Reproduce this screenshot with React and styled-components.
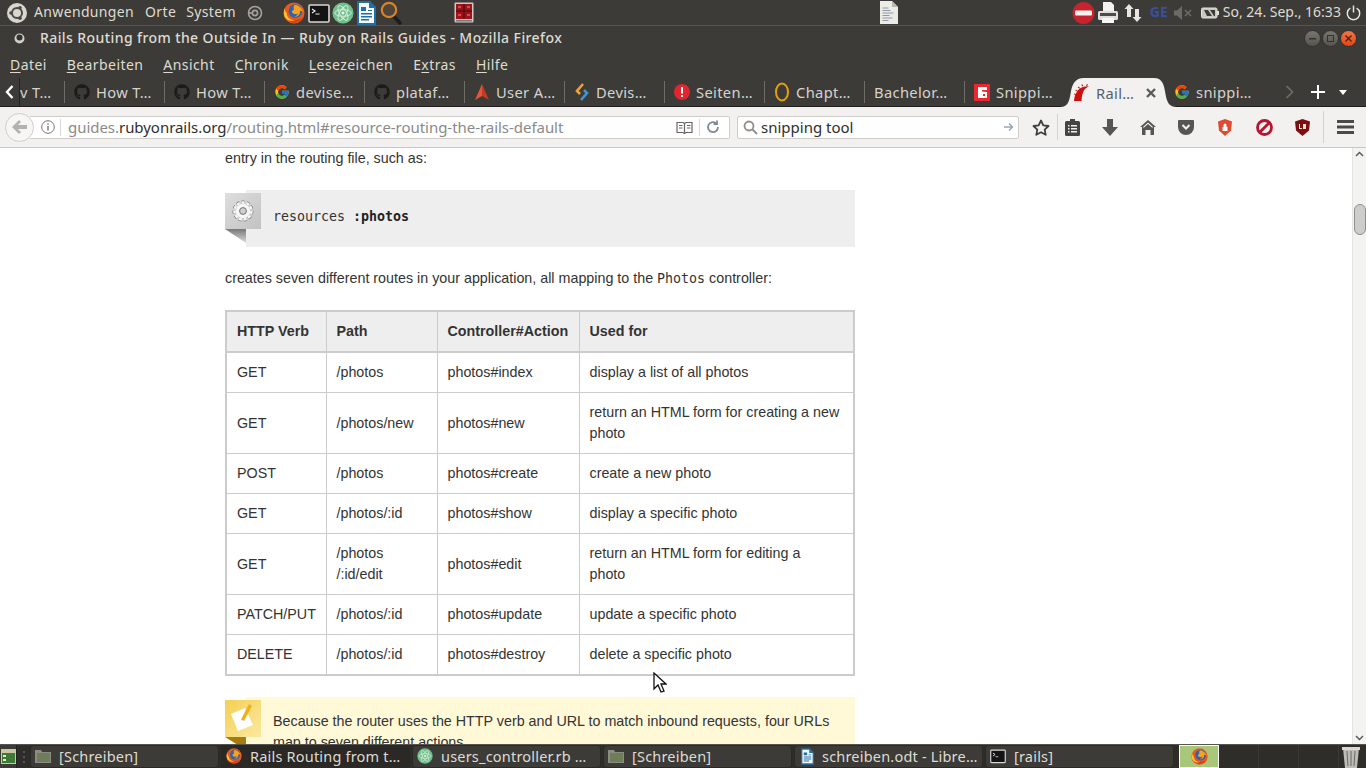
import React from 'react';
import styled, { createGlobalStyle } from 'styled-components';
import { FaGithub } from 'react-icons/fa';
import { FcGoogle } from 'react-icons/fc';

const Global = createGlobalStyle`
  html, body { margin: 0; padding: 0; width: 1366px; height: 768px; overflow: hidden; background: #fff; }
  * { box-sizing: border-box; }
`;
const UI = `"Noto Sans", "Open Sans", sans-serif`;

const Screen = styled.div`
  position: relative; width: 1366px; height: 768px; display: flex; flex-direction: column; overflow: hidden;
  font-family: ${UI};
`;
const Panel = styled.div`
  height: 26px; flex: none; background: #3c3b37; border-bottom: 1px solid #55544f;
  display: flex; align-items: center; color: #dfdbd2; font-size: 14px; padding-left: 7px;
`;
const PanelText = styled.span`
  margin-left: ${p => p.$ml || 0}px; white-space: nowrap; letter-spacing: ${p => p.$ls || 0}px; padding-bottom: 2px;
`;
const GeLabel = styled(PanelText)`color: #3a4f9f; font-weight: 700; font-size: 14px;`;
const Slot = styled.span`
  display: inline-flex; flex: none; align-items: center; justify-content: center; margin-left: ${p => p.$ml || 0}px;
  width: ${p => p.$w}px;
`;
const TitleBar = styled.div`
  height: 26px; flex: none; background: #3c3b37; display: flex; align-items: center; color: #dfdbd2;
  font-size: 14px; font-weight: 500; padding: 0 0 2px 14px;
`;
const WinBtns = styled.div`margin-left: auto; margin-right: 9px; display: flex; gap: 1px; align-items: center;`;
const WinBtn = styled.span`
  width: 17px; height: 17px; border-radius: 50%; display: flex; align-items: center; justify-content: center;
  background: ${p => p.$close ? 'linear-gradient(#f2764a,#dd4814)' : 'linear-gradient(#77766f,#55544f)'};
  border: 1px solid #33322e;
`;
const MenuBar = styled.div`
  height: 26px; flex: none; background: #3c3b37; display: flex; align-items: center; color: #dfdbd2;
  font-size: 14px; padding: 0 0 2px 10px; gap: 20px;
`;
const MenuItem = styled.span`letter-spacing: .42px; u { text-underline-offset: 2px; }`;
const TabStrip = styled.div`
  height: 29px; flex: none; background: #3c3b37; display: flex; align-items: stretch; color: #d6d3cf; font-size: 14.7px;
  border-bottom: 1px solid #1f1e1c;
`;
const Scroller = styled.div`
  width: 20px; flex: none; display: flex; align-items: center; justify-content: center; border-right: 1px solid #23221f;
  padding-bottom: 1px;
`;
const Tab = styled.div`
  position: relative; width: ${p => p.$w || 100}px; flex: none; display: flex; align-items: center; gap: 6px;
  padding-left: ${p => p.$pl ?? 10}px; white-space: nowrap; overflow: hidden; letter-spacing: .35px;
  &::before {
    content: ''; position: absolute; left: 0; top: 3px; bottom: 3px; width: 1px;
    background: ${p => p.$sep ? '#6e6d68' : 'transparent'};
  }
`;
const IconBox = styled.span`display: inline-flex; flex: none; width: 16px; justify-content: center;`;
const ActiveTab = styled.div`
  position: relative; width: 100px; flex: none; height: 29px; color: #55606c; display: flex; align-items: center;
  padding-left: 10px; letter-spacing: .35px; white-space: nowrap;
`;
const TabShape = styled.svg`position: absolute; left: -4px; top: 0; width: 117px; height: 29px;`;
const TabBody = styled.span`position: relative; display: inline-flex; align-items: center; gap: 6px;`;
const TabClose = styled.span`margin-left: 6px; display: inline-flex;`;
const StripCtl = styled.span`
  flex: none; display: flex; align-items: center; justify-content: center; width: ${p => p.$w}px; margin-left: ${p => p.$ml || 0}px;
`;
const NavBar = styled.div`
  height: 41px; flex: none; background: #f2f1f0; border-bottom: 1px solid #c9c7c4; display: flex; align-items: center;
  padding-left: 5px;
`;
const BackBtn = styled.div`
  width: 29px; height: 29px; border-radius: 50%; background: #f7f6f5; border: 1px solid #d0cecb; flex: none; z-index: 1;
  display: flex; align-items: center; justify-content: center;
`;
const UrlBox = styled.div`
  width: 700px; height: 23px; flex: none; margin-left: -4px; background: #fff; border: 1px solid #cfcdca; border-left: none; border-radius: 0 2px 2px 0;
  display: flex; align-items: center; font-size: 15px; color: #8a8a88; padding-left: 11px; letter-spacing: -.04px;
`;
const UrlSep = styled.span`width: 1px; height: 17px; background: #d8d7d5; margin: 0 ${p => p.$mr || 4}px 0 ${p => p.$ml || 4}px; flex: none;`;
const Strong = styled.span`color: #2e2e2e;`;
const SearchBox = styled.div`
  width: 282px; height: 23px; margin-left: 7px; background: #fff; border: 1px solid #cfcdca; border-radius: 2px; flex: none;
  display: flex; align-items: center; font-size: 15px; color: #2e2e2e; padding: 0 4px 0 5px; gap: 3px;
`;
const Tool = styled.span`
  flex: none; display: flex; align-items: center; justify-content: center; width: ${p => p.$w || 38}px;
`;
const VSep = styled.span`width: 1px; height: ${p => p.$h || 24}px; background: #d5d3d0; flex: none; margin-left: ${p => p.$ml}px;`;
const Middle = styled.div`flex: 1; min-height: 0; display: flex; background: #fff;`;
const Page = styled.div`flex: 1; min-width: 0; overflow: hidden; padding-left: 225px;`;
const Col = styled.div`
  width: 630px; font-family: "Liberation Sans", Arial, sans-serif; font-size: 14.3px; line-height: 21px; color: #333;
`;
const Para = styled.p`margin: 0;`;
const Mono = styled.code`font-family: "DejaVu Sans Mono", monospace; font-size: 13.3px;`;
const Callout = styled.div`
  position: relative; margin: 21px 0 21px 21px; background: ${p => p.$bg}; padding: ${p => p.$pad}; min-height: 57px;
`;
const Flag = styled.div`position: absolute; left: -21px; top: 3px; width: 36px; height: 50px;`;
const CodeText = styled.pre`
  margin: 0; font-family: "DejaVu Sans Mono", monospace; font-size: 13.3px; line-height: 21px; color: #333;
  b { color: #222; }
`;
const Table = styled.table`
  width: 630px; table-layout: fixed; border-collapse: collapse; border: 2px solid #ccc; margin-top: 21px;
`;
const Th = styled.th`
  background: #eee; text-align: left; border: 1px solid #ccc; border-bottom: 2px solid #ccc; padding: 9px 10px; font-weight: 700; 
`;
const Td = styled.td`border: 1px solid #ccc; padding: 9px 10px; vertical-align: middle; white-space: pre-line;`;
const ScrollBar = styled.div`
  width: 14px; flex: none; background: #f3f3f2; border-left: 1px solid #e4e4e3; display: flex; flex-direction: column; align-items: center;
  justify-content: space-between; padding: 3px 0 3px; position: relative;
`;
const Thumb = styled.div`
  position: absolute; top: 56px; left: 1px; width: 12px; height: 31px; border-radius: 6px; background: #cdcdcc; border: 1px solid #8e8e8d;
`;
const TaskBar = styled.div`
  height: 24px; flex: none; background: #2e2d2a; border-top: 1px solid #55544f; display: flex; align-items: stretch; color: #dfdbd2;
  font-size: 14.5px;
`;
const DesktopBtn = styled.div`width: 17px; flex: none; display: flex; align-items: center; justify-content: center; background: #3c3b37; border-right:1px solid #222;`;
const Grip = styled.div`width: 13px; flex: none; display:flex; align-items:center; justify-content:center;`;
const TaskBtn = styled.div`
  width: 189px; margin-right: 2px; flex: none; display: flex; align-items: center; gap: 8px; padding: 0 0 1px ${p => p.$pl || 4}px;
  background: ${p => p.$on ? '#2a2926' : '#3c3b37'}; border-radius: 4px; white-space: nowrap; overflow: hidden; letter-spacing: .2px;
  box-shadow: inset 0 0 0 1px #2a2926;
`;
const Workspace = styled.div`
  width: ${p => p.$w}px; flex: none; margin-left: ${p => p.$ml || 0}px; display: flex; align-items: center; justify-content: center;
  background: ${p => p.$on ? '#a9c77a' : '#2e2d2a'}; border: ${p => p.$on ? '1px solid #fff' : 'none'};
  border-right: ${p => p.$on ? '1px solid #fff' : '1px solid #3a3936'};
`;
const Cursor = styled.svg`position: absolute; left: 653px; top: 672px; width: 14px; height: 21px;`;

const Firefox = ({ s = 22 }) => (
  <svg width={s} height={s} viewBox="0 0 24 24">
    <circle cx="12" cy="12" r="11.500" fill="#e8591c" />
    <path d="M2 17a11.500 11.500 0 0 0 20 0c-5 3-13 3-20 0z" fill="#d9431a" />
    <circle cx="13.500" cy="10" r="7.500" fill="#2f63ac" />
    <path d="M13 3c4 .5 8 3.500 9.500 8.500-1.500-2-3-2.500-4-1.500.5 3.500-2.500 6.500-6.500 6 2.500-.5 4-2 4-3.500-2 1.500-6 .5-6.500-2.500 1.500-.5 2-1.500 2.500-2.500C11 6 11.500 4 13 3z" fill="#f7a11d" />
    <path d="M2 7c0 3 1 4 2 5 0 5 4 8 9 7.500-6 3-12-1-12-7.500 0-2 .4-3.500 1-5z" fill="#fbc02d" />
  </svg>
);
const Atom = ({ s = 22 }) => (
  <svg width={s} height={s} viewBox="0 0 24 24">
    <circle cx="12" cy="12" r="11.500" fill="#6fbf8b" />
    <g fill="none" stroke="#d7eedd" strokeWidth="1"><ellipse cx="12" cy="12" rx="9" ry="3.6" /><ellipse cx="12" cy="12" rx="9" ry="3.6" transform="rotate(60 12 12)" /><ellipse cx="12" cy="12" rx="9" ry="3.6" transform="rotate(120 12 12)" /></g>
    <circle cx="12" cy="12" r="1.6" fill="#e6f5ea" />
  </svg>
);
const Term = ({ s = 22 }) => (
  <svg width={s} height={s} viewBox="0 0 22 22">
    <rect x="1" y="3" width="20" height="17" rx="1" fill="#141414" stroke="#d8d8d4" strokeWidth="1.600" />
    <path d="M4 7l3 2-3 2" fill="none" stroke="#eee" strokeWidth="1.200" /><path d="M7.500 12h4" stroke="#eee" />
  </svg>
);
const Writer = ({ w = 19, h = 24 }) => (
  <svg width={w} height={h} viewBox="0 0 19 24">
    <path d="M0 0h13l6 6v18H0z" fill="#1f6fa9" /><path d="M2 2h10v5h5v15H2z" fill="#f6f8fa" />
    <path d="M4 6h5v4H4z M11 9h4v1h-4z M4 12h11v1.4H4z M4 15h11v1.4H4z M4 18h8v1.4H4z" fill="#1f6fa9" />
  </svg>
);
const Magnifier = () => (
  <svg width="22" height="24" viewBox="0 0 22 24">
    <path d="M13.500 15l6.500 7" stroke="#1d1c1a" strokeWidth="3.600" strokeLinecap="round" />
    <circle cx="9" cy="9" r="7.200" fill="#4c463c" stroke="#d9822a" strokeWidth="2.200" />
  </svg>
);
const RedApp = () => (
  <svg width="20" height="21" viewBox="0 0 20 21">
    <rect x=".5" y=".5" width="19" height="20" rx="1" fill="#c9c8c3" /><rect x="2" y="2" width="16" height="15" fill="#a01219" />
    <path d="M10 2v15M2 9h16" stroke="#3a0a0c" /><path d="M4 5h3M13 5h3M4 13h3M13 13h3" stroke="#ef8a90" /><rect x="2" y="18" width="16" height="1.500" fill="#777" />
  </svg>
);
const DocIcon = () => (
  <svg width="18" height="23" viewBox="0 0 18 23">
    <path d="M0 0h12l6 6v17H0z" fill="#ecebe6" /><path d="M12 0l6 6h-6z" fill="#b9b8b2" />
    <path d="M2.5 7h6M2.5 9.5h8M2.5 12h11M2.5 14.5h7M2.5 17h10M2.5 19.5h6" stroke="#8f9aa5" strokeWidth="1" />
  </svg>
);
const Ubuntu = () => (
  <svg width="20" height="20" viewBox="0 0 20 20">
    <circle cx="10" cy="10" r="10" fill="#d9d6cf" />
    <circle cx="10" cy="10" r="5" fill="none" stroke="#4a4944" strokeWidth="2" />
    <circle cx="4" cy="10" r="1.8" fill="#4a4944" /><circle cx="13" cy="4.8" r="1.8" fill="#4a4944" /><circle cx="13" cy="15.2" r="1.8" fill="#4a4944" />
  </svg>
);
const Swirl = () => (
  <svg width="16" height="16" viewBox="0 0 16 16" fill="none" stroke="#a5a39c" strokeWidth="1.6">
    <circle cx="8" cy="8" r="6.5" /><circle cx="8" cy="8" r="2.6" /><path d="M1.5 8h4" />
  </svg>
);
const NoEntry = () => (
  <svg width="23" height="24" viewBox="0 0 23 24">
    <circle cx="11.5" cy="12" r="11" fill="#c6232d" /><rect x="3" y="9.5" width="17" height="5" rx="1" fill="#f6f2f0" />
  </svg>
);
const Printer = () => (
  <svg width="22" height="24" viewBox="0 0 22 24">
    <path d="M6 1h8l3 3v7H6z" fill="#f2f2f0" /><rect x="1" y="10" width="20" height="9" rx="1.500" fill="#dededa" />
    <rect x="3" y="12" width="16" height="3" fill="#4c4b47" /><rect x="5" y="17" width="12" height="5" fill="#f6f6f4" />
  </svg>
);
const UpDown = () => (
  <svg width="18" height="20" viewBox="0 0 18 20" fill="#e8e6e1">
    <path d="M5 1l4.5 5H7v8H3V6H.5z" /><path d="M13 19l4.5-5H15V6h-4v8H8.5z" />
  </svg>
);
const Mute = () => (
  <svg width="19" height="14" viewBox="0 0 19 14">
    <path d="M0 4.5h3L8 0v14L3 9.5H0z" fill="#6b6a65" /><path d="M11 4l6 6M17 4l-6 6" stroke="#6b6a65" strokeWidth="1.6" />
  </svg>
);
const Battery = () => (
  <svg width="18" height="12" viewBox="0 0 18 12">
    <rect x=".5" y="1" width="15.5" height="10" rx="1.4" fill="#c9c7c1" stroke="#e4e2dd" /><rect x="16" y="4" width="2" height="4" fill="#e4e2dd" />
    <path d="M3 3h4l4 6H6zM9 3h5v6h-1z" fill="#3c3b37" />
  </svg>
);
const Power = () => (
  <svg width="15" height="16" viewBox="0 0 15 16" fill="none" stroke="#e8e6e1" strokeWidth="1.5">
    <path d="M4.4 3.2a6.2 6.2 0 1 0 6.2 0" /><path d="M7.5 .5v7" />
  </svg>
);
const Rails = () => (
  <svg width="16" height="17" viewBox="0 0 16 17" fill="#cc0f0f">
    <path d="M0 17C.5 10 4 4.500 9 3c2-.6 4-.8 6-.6-4 1.200-7 4.600-7.500 14.600z" />
    <path d="M12 1.500l1-1.500 1 .6-1 1.500zM8.500 2.600L7.300.8l1-.5 1.100 1.800zM5.300 4.800L3.700 3.300l.7-.7 1.700 1.400zM3.200 7.600L1.400 6.600l.4-.9 1.900.9zM1.800 11L0 10.500l.2-1 1.900.5z" />
  </svg>
);
const UserA = () => (
  <svg width="16" height="16" viewBox="0 0 16 16"><path d="M8 0L1 16l7-4z" fill="#e8543a" /><path d="M8 0l7 16-7-4z" fill="#c23c22" /></svg>
);
const Sublime = () => (
  <svg width="14" height="18" viewBox="0 0 14 18" fill="none" strokeWidth="2.6">
    <path d="M8 1L2 8l3 3" stroke="#f0a030" /><path d="M6 17l6-7-3-3" stroke="#3b97d3" />
  </svg>
);
const Alert = () => (
  <svg width="16" height="16" viewBox="0 0 16 16"><circle cx="8" cy="8" r="8" fill="#e0262f" /><rect x="7" y="3" width="2" height="6.500" fill="#fff" /><rect x="7" y="11" width="2" height="2" fill="#fff" /></svg>
);
const Ring = () => (
  <svg width="16" height="20" viewBox="0 0 16 20"><ellipse cx="8" cy="10" rx="6" ry="8.500" fill="none" stroke="#e39f0c" strokeWidth="2" /></svg>
);
const Snip = () => (
  <svg width="16" height="17" viewBox="0 0 16 17">
    <rect width="16" height="17" fill="#e9282f" /><path d="M4 3h9v3H8v1.500l5 .5v6H4z" fill="#fff" /><path d="M9 10h2v2H9z" fill="#e9282f" />
  </svg>
);
const Gear = () => (
  <g fill="none">
    <circle cx="11" cy="11" r="8.500" stroke="#777" strokeWidth="4" strokeDasharray="3 1.800" />
    <circle cx="11" cy="11" r="8.500" stroke="#f7f7f7" strokeWidth="2.600" strokeDasharray="3 1.800" />
    <circle cx="11" cy="11" r="5.500" stroke="#f7f7f7" strokeWidth="3.600" />
    <circle cx="11" cy="11" r="3.400" stroke="#777" strokeWidth="1" />
  </g>
);
const CodeFlag = () => (
  <svg width="36" height="50" viewBox="0 0 36 50">
    <defs><linearGradient id="cf" x1="0" y1="0" x2="1" y2="1"><stop offset="0" stopColor="#dedede" /><stop offset="1" stopColor="#c2c2c2" /></linearGradient>
    <linearGradient id="cs" x1="0" y1="0" x2="0" y2="1"><stop offset="0" stopColor="#777" /><stop offset="1" stopColor="#ddd" /></linearGradient></defs>
    <path d="M0 36h21v14z" fill="url(#cs)" />
    <rect width="36" height="36" fill="url(#cf)" />
    <g transform="translate(7 7)"><Gear /></g>
  </svg>
);
const NoteFlag = () => (
  <svg width="36" height="50" viewBox="0 0 36 50">
    <defs><linearGradient id="nf" x1="0" y1="0" x2="1" y2="1"><stop offset="0" stopColor="#f4cf54" /><stop offset="1" stopColor="#fbe9a0" /></linearGradient></defs>
    <path d="M0 37h21v13z" fill="#a67c10" />
    <rect width="36" height="37" fill="url(#nf)" />
    <path d="M6 14l14-6 8 17-15 6z" fill="#fff" /><path d="M24 4l3 2-8 15-3-1.500z" fill="#eeb01e" />
  </svg>
);

const tabs = [
  { l: 'How T…', i: <FaGithub size={16} color="#1b1b1b" /> },
  { l: 'How T…', i: <FaGithub size={16} color="#1b1b1b" /> },
  { l: 'devise…', i: <FcGoogle size={16} /> },
  { l: 'plataf…', i: <FaGithub size={16} color="#1b1b1b" /> },
  { l: 'User A…', i: <UserA /> },
  { l: 'Devis…', i: <Sublime /> },
  { l: 'Seiten…', i: <Alert /> },
  { l: 'Chapt…', i: <Ring /> },
  { l: 'Bachelor…' },
  { l: 'Snippi…', i: <Snip /> },
];

const rows = [
  ['GET', '/photos', 'photos#index', 'display a list of all photos'],
  ['GET', '/photos/new', 'photos#new', 'return an HTML form for creating a new\nphoto'],
  ['POST', '/photos', 'photos#create', 'create a new photo'],
  ['GET', '/photos/:id', 'photos#show', 'display a specific photo'],
  ['GET', '/photos\n/:id/edit', 'photos#edit', 'return an HTML form for editing a\nphoto'],
  ['PATCH/PUT', '/photos/:id', 'photos#update', 'update a specific photo'],
  ['DELETE', '/photos/:id', 'photos#destroy', 'delete a specific photo'],
];

const TI = ({ c = '#444', children, w = 18, h = 18, vb = '0 0 18 18' }) => (
  <svg width={w} height={h} viewBox={vb} fill={c}>{children}</svg>
);

function Folder() {
  return (
    <svg width="16" height="14" viewBox="0 0 16 14"><path d="M0 1h6l1 2h9v11H0z" fill="#8d8c84" /><rect x="2" y="4" width="13" height="9" fill="#6f7e59" /></svg>
  );
}

export default function App() {
  return (
    <Screen>
      <Global />
      <Panel>
        <Slot $w={20}><Ubuntu /></Slot>
        <PanelText $ml={7} $ls={.35}>Anwendungen</PanelText>
        <PanelText $ml={11} $ls={.35}>Orte</PanelText>
        <PanelText $ml={10} $ls={.35}>System</PanelText>
        <Slot $w={16} $ml={11}><Swirl /></Slot>
        <Slot $w={22} $ml={20}><Firefox /></Slot>
        <Slot $w={22} $ml={3}><Term /></Slot>
        <Slot $w={22} $ml={2}><Atom /></Slot>
        <Slot $w={19} $ml={3}><Writer /></Slot>
        <Slot $w={22} $ml={4}><Magnifier /></Slot>
        <Slot $w={20} $ml={52}><RedApp /></Slot>
        <Slot $w={18} $ml={406}><DocIcon /></Slot>
        <Slot $w={23} $ml={174}><NoEntry /></Slot>
        <Slot $w={22} $ml={2}><Printer /></Slot>
        <Slot $w={18} $ml={5}><UpDown /></Slot>
        <GeLabel $ml={8}>GE</GeLabel>
        <Slot $w={19} $ml={6}><Mute /></Slot>
        <Slot $w={18} $ml={8}><Battery /></Slot>
        <PanelText $ml={4}>So, 24. Sep., 16:33</PanelText>
        <Slot $w={15} $ml={5}><Power /></Slot>
      </Panel>
      <TitleBar>
        <Slot $w={11}><svg width="11" height="11" viewBox="0 0 11 11"><circle cx="5.500" cy="5.500" r="5" fill="#cfcdc7" /><circle cx="5.500" cy="4.500" r="3" fill="#33322e" /></svg></Slot>
        <PanelText $ml={15} $ls={.41}>Rails Routing from the Outside In — Ruby on Rails Guides - Mozilla Firefox</PanelText>
        <WinBtns>
          <WinBtn><svg width="9" height="9" viewBox="0 0 9 9"><path d="M1 4h7v1.500H1z" fill="#33322e" /></svg></WinBtn>
          <WinBtn><svg width="9" height="9" viewBox="0 0 9 9"><rect x="1.500" y="1.500" width="6" height="6" fill="none" stroke="#33322e" /></svg></WinBtn>
          <WinBtn $close><svg width="9" height="9" viewBox="0 0 9 9"><path d="M1.500 1.500l6 6M7.500 1.500l-6 6" stroke="#5a1c08" strokeWidth="1.300" /></svg></WinBtn>
        </WinBtns>
      </TitleBar>
      <MenuBar>
        {['Datei', 'Bearbeiten', 'Ansicht', 'Chronik', 'Lesezeichen', 'Extras', 'Hilfe'].map((m) => {
          const k = m === 'Extras' ? 1 : 0;
          return <MenuItem key={m}>{m.slice(0, k)}<u>{m[k]}</u>{m.slice(k + 1)}</MenuItem>;
        })}
      </MenuBar>
      <TabStrip>
        <Scroller><svg width="9" height="16" viewBox="0 0 9 16" fill="none" stroke="#fff" strokeWidth="2.400"><path d="M7.500 2L2 8l5.500 6" /></svg></Scroller>
        <Tab $w={44} $pl={0}>v T…</Tab>
        {tabs.map((t, i) => <Tab key={i} $sep>{t.i && <IconBox>{t.i}</IconBox>}{t.l}</Tab>)}
        <ActiveTab>
          <TabShape viewBox="0 0 117 29"><path d="M0 29c7 0 9-4 10.500-13C12 6 15 0 24 0h70c8 0 10 6 11.500 16 1.500 9 4 13 11.500 13z" fill="#f2f1f0" /></TabShape>
          <TabBody><Rails />Rail…<TabClose><svg width="10" height="10" viewBox="0 0 10 10" stroke="#5c5b56" strokeWidth="2.400"><path d="M1 1l8 8M9 1l-8 8" /></svg></TabClose></TabBody>
        </ActiveTab>
        <Tab><FcGoogle size={16} style={{ flex: 'none' }} />snippi…</Tab>
        <StripCtl $w={14} $ml={18}><svg width="9" height="16" viewBox="0 0 9 16" fill="none" stroke="#6f6e69" strokeWidth="1.600"><path d="M1.500 2L7.500 8l-6 6" /></svg></StripCtl>
        <StripCtl $w={14} $ml={15}><svg width="14" height="14" viewBox="0 0 14 14" fill="#fff"><path d="M6 0h2v6h6v2H8v6H6V8H0V6h6z" /></svg></StripCtl>
        <StripCtl $w={8} $ml={14}><svg width="8" height="5" viewBox="0 0 8 5" fill="#fff"><path d="M0 0h8L4 5z" /></svg></StripCtl>
      </TabStrip>
      <NavBar>
        <BackBtn><svg width="16" height="14" viewBox="0 0 16 14" fill="#b3b2b0"><path d="M7 0l2 2-3 3h9v4H6l3 3-2 2L0 7z" /></svg></BackBtn>
        <UrlBox>
          <svg style={{ flex: 'none' }} width="14" height="14" viewBox="0 0 14 14" fill="none" stroke="#777"><circle cx="7" cy="7" r="6.300" /><path d="M7 6v4.500M7 3.500v1.200" strokeWidth="1.400" /></svg>
          <UrlSep $ml={5} $mr={7} />
          <span>guides.<Strong>rubyonrails.org</Strong>/routing.html#resource-routing-the-rails-default</span>
          <svg style={{ marginLeft: 'auto', flex: 'none' }} width="17" height="13" viewBox="0 0 17 13" fill="none" stroke="#666" strokeWidth="1.200"><path d="M1 1.500h6l1.500 1 1.500-1h6v10h-6l-1.500 1-1.500-1H1zM8.500 2.500v9M3 4.500h3.500M3 7h3.500M11 4.500h3.500M11 7h3.500" /></svg>
          <UrlSep $ml={6} $mr={6} />
          <svg style={{ marginRight: 9, flex: 'none' }} width="14" height="14" viewBox="0 0 14 14" fill="none" stroke="#7f8b96" strokeWidth="1.800"><path d="M12 7a5 5 0 1 1-1.500-3.500M11 .5v3.500H7.500" /></svg>
        </UrlBox>
        <SearchBox>
          <svg width="15" height="15" viewBox="0 0 15 15" fill="none" stroke="#8d8d8b" strokeWidth="1.800"><circle cx="6" cy="6" r="4.500" /><path d="M9.500 9.500L14 14" /></svg>
          snipping tool
          <svg style={{ marginLeft: 'auto' }} width="10" height="10" viewBox="0 0 10 10" fill="none" stroke="#9aa7b3" strokeWidth="1.500"><path d="M0 5h8M5 1.500L8.500 5 5 8.500" /></svg>
        </SearchBox>
        <Tool $w={44}><svg width="18" height="17" viewBox="0 0 18 17" fill="none" stroke="#3f3f3f" strokeWidth="1.800" strokeLinejoin="round"><path d="M9 1.500l2.300 4.900 5.200.6-3.800 3.600 1 5.200L9 13.300l-4.700 2.500 1-5.200L1.500 7l5.200-.6z" /></svg></Tool>
        <VSep $h={26} $ml={-6} />
        <Tool $w={28}><TI c="#444" w={15} h={17} vb="0 0 15 17"><path d="M5 0h5v2h3.500a1.500 1.500 0 0 1 1.500 1.500v12a1.500 1.500 0 0 1-1.500 1.500h-12A1.500 1.500 0 0 1 0 15.500v-12A1.500 1.500 0 0 1 1.500 2H5z" /><path d="M3 6h1.500v1.500H3zM6 6h6v1.500H6zM3 9h1.500v1.500H3zM6 9h6v1.500H6zM3 12h1.500v1.500H3zM6 12h6v1.500H6z" fill="#f2f1f0" /></TI></Tool>
        <Tool $w={48}><TI c="#555" w={16} h={17} vb="0 0 16 17"><path d="M5 0h6v8h5l-8 9-8-9h5z" /></TI></Tool>
        <Tool $w={28}><TI c="#555" w={16} h={15} vb="0 0 16 15"><path d="M8 0l8 7h-2v8h-3.500v-5h-5v5H2V7H0z" /><path d="M8 2.500l5 4.500-.8.800L8 4 3.800 7.800 3 7z" fill="#f2f1f0" /></TI></Tool>
        <Tool $w={48}><TI c="#555" w={16} h={15} vb="0 0 16 15"><path d="M1 0h14a1 1 0 0 1 1 1v6a8 8 0 0 1-16 0V1a1 1 0 0 1 1-1z" /><path d="M4.500 5L8 8.500 11.500 5" fill="none" stroke="#f2f1f0" strokeWidth="2" /></TI></Tool>
        <Tool $w={30}><TI c="#e04a2f" w={14} h={17} vb="0 0 14 17"><path d="M7 0l7 2.500-1 9L7 17l-6-5.500-1-9z" /><path d="M4.500 8h5v4h-5zM5.500 8V6a1.500 1.500 0 0 1 3 0v2" fill="#fff" /></TI></Tool>
        <Tool $w={48}><svg width="17" height="17" viewBox="0 0 17 17" fill="none" stroke="#b8142f" strokeWidth="2.800"><circle cx="8.500" cy="8.500" r="7" /><path d="M3.500 13.500l10-10" /></svg></Tool>
        <Tool $w={28}><TI c="#7a0f12" w={15} h={17} vb="0 0 15 17"><path d="M7.500 0l7.500 2.500-1 9-6.500 5.500-6.500-5.500-1-9z" /><path d="M4 5v5h3V9H5V5zM8 5h3v5H8z" fill="#f5e2d5" /></TI></Tool>
        <VSep $h={32} $ml={7} />
        <Tool $w={42}><TI c="#4a4a4a" w={17} h={14} vb="0 0 17 14"><path d="M0 0h17v3H0zM0 5.500h17v3H0zM0 11h17v3H0z" /></TI></Tool>
      </NavBar>
      <Middle>
        <Page>
          <Col>
            <Para>entry in the routing file, such as:</Para>
            <Callout $bg="#eee" $pad="16px 0 20px 27px">
              <Flag><CodeFlag /></Flag>
              <CodeText>resources <b>:photos</b></CodeText>
            </Callout>
            <Para>creates seven different routes in your application, all mapping to the <Mono>Photos</Mono> controller:</Para>
            <Table>
              <colgroup><col style={{ width: 100 }} /><col style={{ width: 111 }} /><col style={{ width: 142 }} /><col /></colgroup>
              <thead><tr><Th>HTTP Verb</Th><Th>Path</Th><Th>Controller#Action</Th><Th>Used for</Th></tr></thead>
              <tbody>
                {rows.map((r, i) => <tr key={i}>{r.map((c, j) => <Td key={j}>{c}</Td>)}</tr>)}
              </tbody>
            </Table>
            <Callout $bg="#fff9d8" $pad="14px 12px 20px 27px">
              <Flag><NoteFlag /></Flag>
              Because the router uses the HTTP verb and URL to match inbound requests, four URLs map to seven different actions.
            </Callout>
          </Col>
        </Page>
        <ScrollBar>
          <svg width="9" height="6" viewBox="0 0 9 6" fill="none" stroke="#555" strokeWidth="1.400"><path d="M1 5l3.500-3.500L8 5" /></svg>
          <Thumb />
          <svg width="9" height="6" viewBox="0 0 9 6" fill="none" stroke="#555" strokeWidth="1.400"><path d="M1 1l3.500 3.500L8 1" /></svg>
        </ScrollBar>
      </Middle>
      <TaskBar>
        <DesktopBtn><svg width="15" height="15" viewBox="0 0 15 15"><rect width="15" height="15" fill="#c9c6a8" /><rect x="1" y="4" width="13" height="10" fill="#3f7a35" /><rect x="2" y="6" width="3" height="2" fill="#dcefc5" /><rect x="2" y="10" width="3" height="2" fill="#dcefc5" /></svg></DesktopBtn>
        <Grip><svg width="2" height="14" viewBox="0 0 2 14" fill="#55544f"><path d="M0 1h2v2H0zM0 6h2v2H0zM0 11h2v2H0z" /></svg></Grip>
        <TaskBtn $pl={5}><Folder />[Schreiben]</TaskBtn>
        <TaskBtn $on $pl={5}><Firefox s={16} />Rails Routing from t…</TaskBtn>
        <TaskBtn $pl={5}><Atom s={16} />users_controller.rb …</TaskBtn>
        <TaskBtn $pl={5}><Folder />[Schreiben]</TaskBtn>
        <TaskBtn $pl={7}><Writer w={13} h={17} />schreiben.odt - Libre…</TaskBtn>
        <TaskBtn $pl={5}><Term s={16} />[rails]</TaskBtn>
        <Workspace $w={40} $on $ml={3}><Firefox s={17} /></Workspace>
        <Workspace $w={40} /><Workspace $w={40} /><Workspace $w={40} />
        <Slot $w={24}><svg width="22" height="22" viewBox="0 0 22 22"><path d="M3 2h16l-2 20H5z" fill="#bdbcb6" /><path d="M7 5l1 15M11 5v15M15 5l-1 15" stroke="#6a6964" /><rect x="2" y="1" width="18" height="3" fill="#d8d7d1" /></svg></Slot>
      </TaskBar>
      <Cursor viewBox="0 0 14 21"><path d="M1 1v16l4-4 3 7 3-1-3-7h5z" fill="#fff" stroke="#111" strokeWidth="1.300" /></Cursor>
    </Screen>
  );
}
